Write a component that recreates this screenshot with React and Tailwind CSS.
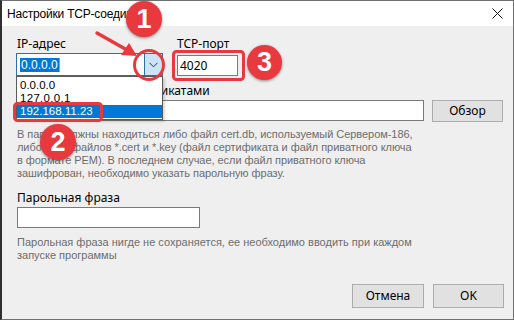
import React from 'react'

const UI = { fontFamily: '"Noto Sans", "Open Sans", sans-serif' }
const HELP = { fontFamily: '"Liberation Sans", Arial, sans-serif' }

function Badge({ n, className }) {
  return (
    <div
      className={`absolute rounded-full bg-[#e8393f] text-white flex items-center justify-center font-bold text-[27px] shadow-[0_1px_3px_rgba(0,0,0,0.45)] ${className}`}
      style={HELP}
    >
      {n}
    </div>
  )
}

export default function App() {
  return (
    <div className="relative w-[514px] h-[320px] bg-[#efefef] border border-[#707070] border-l-[#2f2f2f] border-l-2 overflow-hidden text-[12px] text-black" style={UI}>
      {/* Title bar */}
      <div className="h-[25px] bg-white flex items-center justify-between pl-[5px] pr-[10px]">
        <span className="text-[12px] tracking-[-0.2px]" style={HELP}>Настройки TCP-соединения</span>
        <svg width="11" height="11" viewBox="0 0 11 11">
          <path d="M0.5 0.5 L10.5 10.5 M10.5 0.5 L0.5 10.5" stroke="#111" strokeWidth="1" />
        </svg>
      </div>

      {/* Body */}
      <div className="pl-[14px] pr-[9px]">
        <div className="flex mt-[10px]">
          <div className="w-[147px]">
            <div className="pl-[1px] h-[16px] leading-[16px]">IP-адрес</div>
            <div className="relative mt-[1px]">
              <div className="h-[23px] bg-white border border-[#2f6fa8] flex">
                <div className="flex-1 flex items-center pl-[3px]">
                  <span className="bg-[#0078d7] text-white px-[1px] leading-[14px]" style={HELP}>0.0.0.0</span>
                  <span className="w-[1px] h-[14px] bg-[#f08a24]"></span>
                </div>
                <div className="w-[18px] bg-[#cce4f7] border-l border-[#2f6fa8] flex items-center justify-center">
                  <svg width="9" height="6" viewBox="0 0 9 6">
                    <path d="M0.5 0.8 L4.5 4.8 L8.5 0.8" fill="none" stroke="#333" strokeWidth="1" />
                  </svg>
                </div>
              </div>
              {/* Dropdown list */}
              <div className="absolute left-0 top-full w-[147px] bg-white border border-[#5a5a5a] pt-[2px] pb-[1px] z-10 shadow-[2px_2px_2px_rgba(0,0,0,0.15)] text-[11.5px]" style={HELP}>
                <div className="h-[13px] leading-[13px] px-[3px]">0.0.0.0</div>
                <div className="h-[13px] leading-[13px] px-[3px] tracking-[0.3px]">127.0.0.1</div>
                <div className="h-[13px] leading-[13px] px-[3px] bg-[#0078d7] text-white">192.168.11.23</div>
              </div>
            </div>
          </div>
          <div className="ml-[14px]">
            <div className="h-[16px] leading-[16px]">TCP-порт</div>
            <div className="mt-[3px] w-[61px] h-[21px] bg-white border border-[#7a7a7a] flex items-center pl-[2px]">4020</div>
          </div>
        </div>

        <div className="mt-[7px] pl-[1px] h-[16px] leading-[16px]">Путь к каталогу с сертификатами</div>
        <div className="mt-[1px] flex items-start">
          <div className="w-[408px] h-[21px] bg-white border border-[#7a7a7a]"></div>
          <button className="ml-[8px] w-[71px] h-[22px] bg-[#e1e1e1] border border-[#adadad]">Обзор</button>
        </div>

        <div className="mt-[6px] pl-[1px] text-[11px] leading-[13px] text-[#6d6d6d] tracking-[-0.05px]" style={HELP}>
          <div>В папке должны находиться либо файл cert.db, используемый Сервером-186,</div>
          <div>либо пара файлов *.cert и *.key (файл сертификата и файл приватного ключа</div>
          <div>в формате PEM). В последнем случае, если файл приватного ключа</div>
          <div>зашифрован, необходимо указать парольную фразу.</div>
        </div>

        <div className="mt-[10px] pl-[1px] h-[16px] leading-[16px]">Парольная фраза</div>
        <div className="mt-[1px] ml-[1px] w-[183px] h-[21px] bg-white border border-[#7a7a7a]"></div>

        <div className="mt-[8px] pl-[1px] text-[11px] leading-[13px] text-[#6d6d6d]" style={HELP}>
          <div>Парольная фраза нигде не сохраняется, ее необходимо вводить при каждом</div>
          <div>запуске программы</div>
        </div>

        <div className="mt-[22px] flex justify-end gap-[9px]">
          <button className="w-[72px] h-[24px] bg-[#e1e1e1] border border-[#adadad]">Отмена</button>
          <button className="w-[71px] h-[24px] bg-[#e1e1e1] border border-[#adadad]">OK</button>
        </div>
      </div>

      {/* Annotations */}
      <svg className="absolute left-[-2px] top-[-1px] pointer-events-none z-20" width="514" height="320" viewBox="0 0 514 320">
        <line x1="97" y1="33" x2="127" y2="50" stroke="#e8393f" strokeWidth="3.5" strokeLinecap="round" />
        <polygon points="137,56 121,55 129,43" fill="#e8393f" />
        <circle cx="149" cy="65" r="14.5" fill="none" stroke="#e8393f" strokeWidth="3" />
        <rect x="173.5" y="51.5" width="70" height="28" rx="3" fill="none" stroke="#e8393f" strokeWidth="3" />
        <rect x="14.5" y="103.5" width="87" height="17" rx="3" fill="none" stroke="#e8393f" strokeWidth="3" />
      </svg>
      <Badge n="1" className="left-[124px] top-[0px] w-[36px] h-[36px] z-30" />
      <Badge n="2" className="left-[38px] top-[123px] w-[36px] h-[36px] z-30" />
      <Badge n="3" className="left-[245px] top-[44px] w-[35px] h-[35px] z-30" />
    </div>
  )
}
